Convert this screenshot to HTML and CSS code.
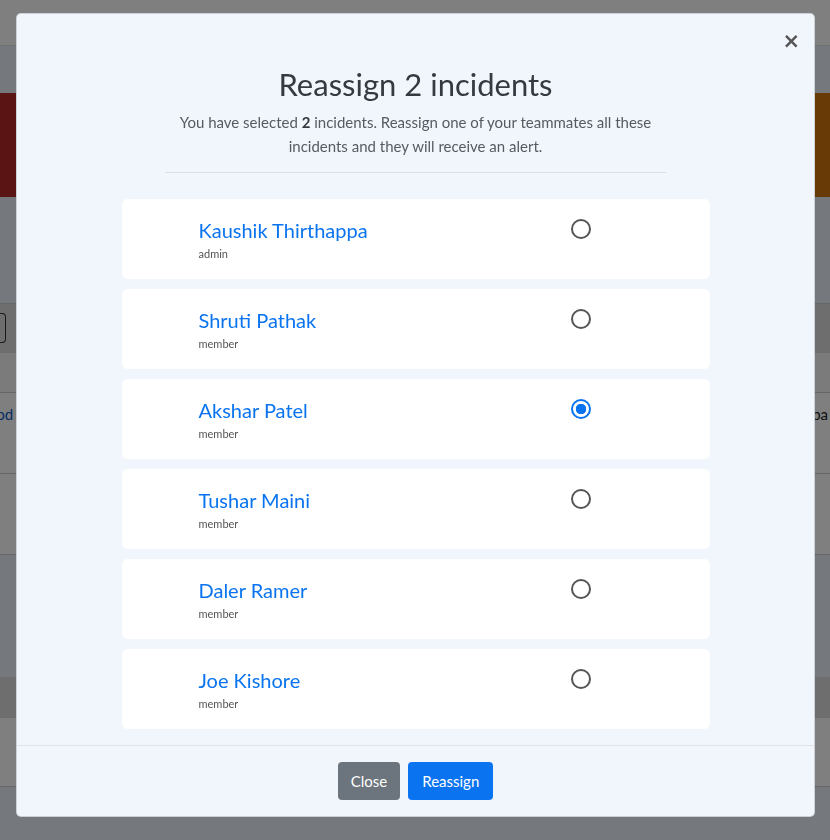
FILE: index.html
```html
<!DOCTYPE html>
<html>
<head>
<meta charset="utf-8">
<link rel="stylesheet" href="styles.css">
</head>
<body>
<div class="page">
  <div class="topbar"></div>
  <div class="subbar"></div>
  <div class="banner"><div class="banner-red"></div><div class="banner-orange"></div></div>
  <div class="spacer1"></div>
  <div class="toolbar"><div class="search"></div></div>
  <div class="thead"></div>
  <div class="trow"><span class="link">Wood</span><span class="dark">Kaushik Thirthappa</span></div>
  <div class="trow"></div>
  <div class="spacer2"></div>
  <div class="thead2"></div>
  <div class="trow2"></div>
</div>
<div class="backdrop"></div>
<div class="modal">
  <div class="modal-header"><button class="close">&times;</button></div>
  <div class="modal-body">
    <h2 class="title">Reassign 2 incidents</h2>
    <p class="subtitle">You have selected <b>2</b> incidents. Reassign one of your teammates all these incidents and they will receive an alert.</p>
    <hr class="divider">
    <div class="list">
      <div class="card"><div class="who"><div class="name">Kaushik Thirthappa</div><div class="role">admin</div></div><span class="radio"></span></div>
      <div class="card"><div class="who"><div class="name">Shruti Pathak</div><div class="role">member</div></div><span class="radio"></span></div>
      <div class="card"><div class="who"><div class="name">Akshar Patel</div><div class="role">member</div></div><span class="radio checked"></span></div>
      <div class="card"><div class="who"><div class="name">Tushar Maini</div><div class="role">member</div></div><span class="radio"></span></div>
      <div class="card"><div class="who"><div class="name">Daler Ramer</div><div class="role">member</div></div><span class="radio"></span></div>
      <div class="card"><div class="who"><div class="name">Joe Kishore</div><div class="role">member</div></div><span class="radio"></span></div>
    </div>
  </div>
  <div class="modal-footer">
    <button class="btn btn-gray">Close</button>
    <button class="btn btn-blue">Reassign</button>
  </div>
</div>
</body>
</html>
```
FILE: styles.css
```css
* { box-sizing: border-box; }
html, body { margin: 0; padding: 0; }
body { font-family: "Lato", "Open Sans", sans-serif; background: #eaf2fa; width: 830px; height: 840px; overflow: hidden; }
.page { width: 830px; }
.topbar { height: 46px; background: #fff; border-bottom: 1px solid #e0e0e0; }
.subbar { height: 47px; background: #eaf2fa; }
.banner { height: 104px; display: flex; }
.banner-red { flex: 1; background: #b42826; }
.banner-orange { flex: 1; background: #d0740a; }
.spacer1 { height: 107px; background: #eaf2fa; border-bottom: 1px solid #ccc; }
.toolbar { height: 49px; background: #dcdcdc; padding: 9px 0 0 0; }
.search { width: 6px; height: 30px; border: 1px solid #333; border-left: none; border-radius: 0 4px 4px 0; }
.thead { height: 40px; background: #f7f7f7; border-bottom: 1px solid #ccc; }
.trow { height: 81px; background: #fff; border-bottom: 1px solid #ccc; display: flex; justify-content: space-between; padding-top: 12px; font-size: 15px; }
.trow .link { color: #0a58ca; margin-left: -27px; }
.trow .dark { color: #222; margin-right: 2px; }
.spacer2 { height: 122px; background: #eaf2fa; }
.thead2 { height: 41px; background: #dcdcdc; }
.trow2 { height: 69px; background: #fff; border-bottom: 1px solid #ccc; }

.backdrop { position: fixed; inset: 0; background: rgba(0,0,0,0.5); }

.modal { position: fixed; left: 16px; top: 13px; width: 799px; height: 804px; background: #f1f6fd; border: 1px solid rgba(0,0,0,0.15); border-radius: 5px; display: flex; flex-direction: column; overflow: hidden; color: #343a40; }
.modal-header { display: flex; justify-content: flex-end; padding: 11px 14px 0 0; height: 43px; }
.close { background: none; border: none; font-family: "DejaVu Sans", sans-serif; font-size: 21px; font-weight: bold; color: #555; line-height: 22px; padding: 0; cursor: pointer; }
.modal-body { flex: 1; overflow: hidden; display: flex; flex-direction: column; align-items: center; }
.title { margin: 9px 0 0; font-size: 31px; font-weight: 400; line-height: 36px; color: #343a40; }
.subtitle { margin: 8px 0 0; width: 500px; text-align: center; font-size: 15px; line-height: 24px; color: #555b61; }
.subtitle b { font-weight: 700; color: #343a40; }
.divider { margin: 14px 0 0; width: 501px; border: none; border-top: 1px solid #dcdfe3; }
.list { margin-top: 26px; display: flex; flex-direction: column; gap: 10px; width: 588px; }
.card { background: #fff; border-radius: 6px; height: 80px; flex: none; display: flex; align-items: flex-start; padding: 19px 119px 0 77px; justify-content: space-between; }
.name { font-size: 20px; line-height: 24px; color: #0a74f0; }
.role { font-size: 11px; line-height: 14px; color: #555; margin-top: 5px; }
.radio { width: 20px; height: 20px; border-radius: 50%; border: 2px solid #555; margin-top: 1px; }
.radio.checked { border-color: #0a74f0; background: radial-gradient(circle, #0a74f0 0 5px, #fff 5.5px); }
.modal-footer { height: 71px; flex: none; border-top: 1px solid #dfe3e8; display: flex; justify-content: center; align-items: center; gap: 8px; }
.btn { border: none; border-radius: 4px; color: #fff; font-family: inherit; font-size: 15px; height: 38px; padding: 0 13px; line-height: 38px; }
.btn-gray { background: #6c757d; }
.btn-blue { background: #0a74f0; padding: 0 14px; }
```
